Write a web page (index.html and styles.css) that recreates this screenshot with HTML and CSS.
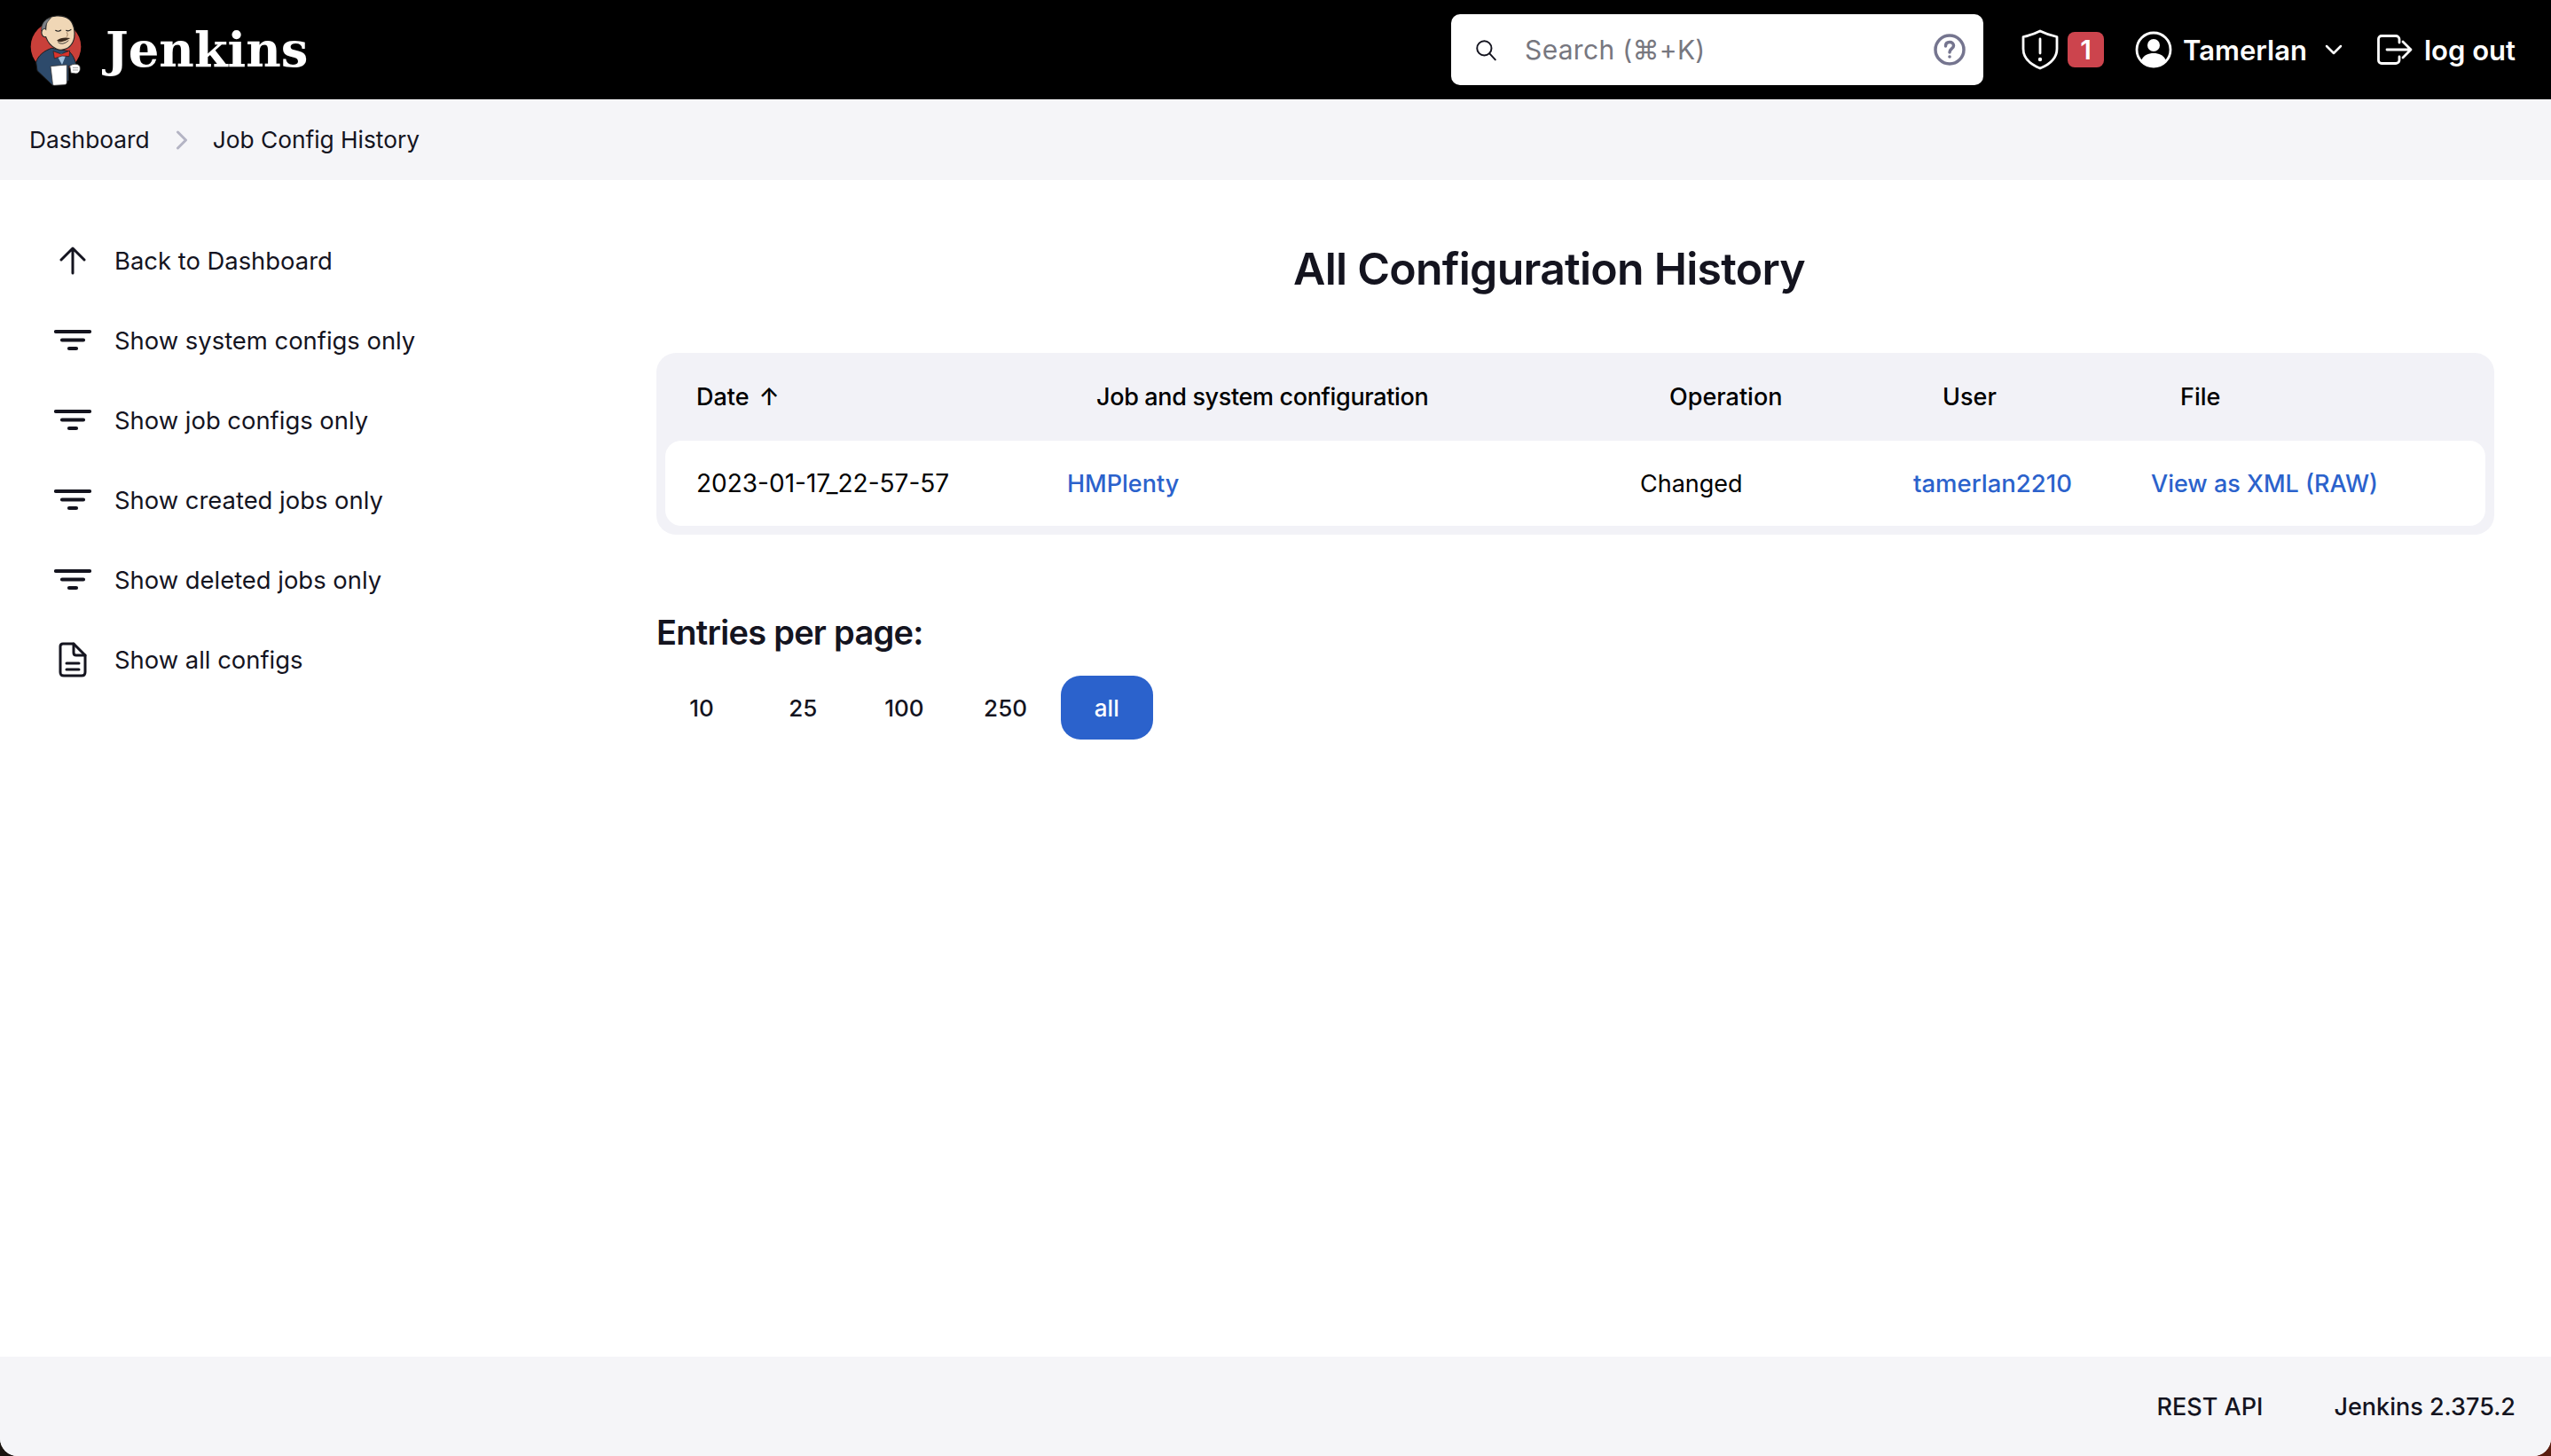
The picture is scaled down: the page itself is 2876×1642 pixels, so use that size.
FILE: index.html
```html
<!DOCTYPE html>
<html lang="en">
<head>
<meta charset="utf-8">
<title>Job Config History</title>
<link rel="stylesheet" href="styles.css">
</head>
<body>
<div class="page">
  <header class="topbar">
    <a class="brand">
      <svg class="logo" viewBox="0 0 270 270" width="90" height="90" aria-hidden="true">
        <circle cx="129" cy="125" r="85" fill="#c9403a"/>
        <path d="M62 178 C68 155 90 138 115 130 L172 140 C186 150 194 170 198 188 L172 190 L172 240 L118 256 L66 206 Z" fill="#2d4a6b" stroke="#1c1c1c" stroke-width="3"/>
        <path d="M130 150 L166 146 L150 186 Z" fill="#9fc0dc"/>
        <path d="M120 140 L147 150 L176 138 L174 158 L150 156 L124 165 Z" fill="#d9342c" stroke="#1c1c1c" stroke-width="2"/>
        <path d="M97 34 C110 20 150 14 174 32 C195 52 196 90 186 110 C176 130 152 142 130 132 C112 124 100 106 95 92 C85 94 77 82 82 70 C85 62 92 62 95 66 Z" fill="#f0d7b6" stroke="#262626" stroke-width="3.500"/>
        <path d="M102 30 C86 38 78 54 81 72 C85 64 90 63 94 66 C94 50 100 40 112 28 Z" fill="#7c8086" stroke="#262626" stroke-width="2"/>
        <path d="M128 70 Q137 76 146 69 M164 70 Q172 74 180 67" fill="none" stroke="#222" stroke-width="3.500" stroke-linecap="round"/>
        <path d="M166 76 Q172 88 164 92" fill="none" stroke="#8a6a4a" stroke-width="2.500"/>
        <path d="M132 104 Q150 90 178 96 Q162 106 150 108 Q140 110 132 104 Z" fill="#3a2a1e"/>
        <path d="M136 110 Q152 122 172 104" fill="none" stroke="#222" stroke-width="2.500"/>
        <path d="M111 191 L166 186 L166 246 C166 252 162 254 156 254 L124 256 C120 256 118 254 118 250 Z" fill="#fff" stroke="#3a3a3a" stroke-width="2.500"/>
        <path d="M176 190 C186 182 204 182 209 190 C214 200 210 214 198 216 L180 214 Z" fill="#fff" stroke="#3a3a3a" stroke-width="2.500"/>
        <path d="M186 196 H204 M186 204 H204" stroke="#777" stroke-width="2"/>
      </svg>
      <span class="wordmark">Jenkins</span>
    </a>
    <div class="search">
      <svg class="search-icon" viewBox="0 0 24 24" width="26" height="26" aria-hidden="true"><circle cx="10.500" cy="10.500" r="7.500"/><path d="M16 16 L22 22.500"/></svg>
      <span class="search-text">Search (⌘+K)</span>
      <svg class="help-icon" viewBox="0 0 36 36" width="36" height="36" aria-hidden="true"><circle cx="18" cy="18" r="16"/><path d="M13.500 14 C13.500 11 15.500 9.500 18 9.500 C20.500 9.500 22.500 11 22.500 13.500 C22.500 17 18 17 18 21"/><circle class="dot" cx="18" cy="26" r="1.800"/></svg>
    </div>
    <div class="actions">
      <div class="alert">
        <svg class="bar-icon" viewBox="0 0 44 46" width="44" height="46" aria-hidden="true"><path d="M22 2 C28 5 34 7 41 8.500 V22 C41 33 32 40 22 44 C12 40 3 33 3 22 V8.500 C10 7 16 5 22 2 Z"/><path d="M22 11 V27"/><circle class="dot" cx="22" cy="34" r="2.200"/></svg>
        <span class="badge">1</span>
      </div>
      <div class="user">
        <svg class="bar-icon" viewBox="0 0 42 42" width="42" height="42" aria-hidden="true"><circle cx="21" cy="21" r="19"/><circle class="dot" cx="21" cy="16" r="7"/><path class="dot" d="M7 33 C10 27 15 25 21 25 C27 25 32 27 35 33 C31 38 26 40 21 40 C16 40 11 38 7 33 Z"/></svg>
        <span class="user-name">Tamerlan</span>
        <svg class="chevron" viewBox="0 0 20 12" width="20" height="12" aria-hidden="true"><path d="M2 2 L10 10 L18 2"/></svg>
      </div>
      <div class="logout">
        <svg class="bar-icon" viewBox="0 0 40 34" width="40" height="34" aria-hidden="true"><path d="M25 9 V5 C25 3 23 1.500 21 1.500 H5 C3 1.500 1.500 3 1.500 5 V29 C1.500 31 3 32.500 5 32.500 H21 C23 32.500 25 31 25 29 V25"/><path d="M11 17 H38 M29 8 L38 17 L29 26"/></svg>
        <span class="user-name">log out</span>
      </div>
    </div>
  </header>

  <nav class="crumbs">
    <span>Dashboard</span>
    <svg class="crumb-sep" viewBox="0 0 14 22" width="14" height="22" aria-hidden="true"><path d="M2.500 2 L11.500 11 L2.500 20"/></svg>
    <span>Job Config History</span>
  </nav>

  <div class="body">
    <aside class="side">
      <a class="task">
        <span class="task-icon"><svg viewBox="0 0 30 32" width="30" height="32" aria-hidden="true"><path d="M15 30 V3 M2 15 L15 2 L28 15"/></svg></span>
        Back to Dashboard
      </a>
      <a class="task">
        <span class="task-icon"><svg class="filter" viewBox="0 0 42 26" width="42" height="26" aria-hidden="true"><path d="M2 3 H40 M9 12.500 H33 M17 22 H25"/></svg></span>
        Show system configs only
      </a>
      <a class="task">
        <span class="task-icon"><svg class="filter" viewBox="0 0 42 26" width="42" height="26" aria-hidden="true"><path d="M2 3 H40 M9 12.500 H33 M17 22 H25"/></svg></span>
        Show job configs only
      </a>
      <a class="task">
        <span class="task-icon"><svg class="filter" viewBox="0 0 42 26" width="42" height="26" aria-hidden="true"><path d="M2 3 H40 M9 12.500 H33 M17 22 H25"/></svg></span>
        Show created jobs only
      </a>
      <a class="task">
        <span class="task-icon"><svg class="filter" viewBox="0 0 42 26" width="42" height="26" aria-hidden="true"><path d="M2 3 H40 M9 12.500 H33 M17 22 H25"/></svg></span>
        Show deleted jobs only
      </a>
      <a class="task">
        <span class="task-icon"><svg class="doc" viewBox="0 0 32 40" width="32" height="40" aria-hidden="true"><path d="M5 2 H17 L30 15 V34 C30 37 28 38 26 38 H6 C3 38 2 37 2 34 V5 C2 3 3 2 5 2 Z"/><path d="M17 2 V12 C17 14 18 15 20 15 H30"/><path d="M9 24 H23 M9 31 H23"/></svg></span>
        Show all configs
      </a>
    </aside>

    <main class="main">
      <h1 class="title">All Configuration History</h1>
      <div class="table-wrap">
        <table class="history">
          <thead>
            <tr>
              <th class="c1">Date<span class="sort">↑</span></th>
              <th class="c2">Job and system configuration</th>
              <th class="c3">Operation</th>
              <th class="c4">User</th>
              <th class="c5">File</th>
            </tr>
          </thead>
          <tbody>
            <tr>
              <td class="date">2023-01-17_22-57-57</td>
              <td><a class="link">HMPlenty</a></td>
              <td>Changed</td>
              <td><a class="link wide">tamerlan2210</a></td>
              <td><a class="link">View as XML (RAW)</a></td>
            </tr>
          </tbody>
        </table>
      </div>
      <h2 class="entries-title">Entries per page:</h2>
      <div class="pager">
        <a class="page-btn">10</a>
        <a class="page-btn">25</a>
        <a class="page-btn">100</a>
        <a class="page-btn">250</a>
        <a class="page-btn active">all</a>
      </div>
    </main>
  </div>

  <footer class="foot">
    <span>REST API</span>
    <span>Jenkins 2.375.2</span>
  </footer>
</div>
</body>
</html>
```
FILE: styles.css
```css
* { box-sizing: border-box; }
html, body { margin: 0; height: 100%; }
body {
  background: linear-gradient(90deg, #1a1410, #5a1e10);
  font-family: Inter, "Noto Sans", sans-serif;
  font-size: 27px;
  color: #14141f;
}
.page {
  height: 1642px;
  display: flex;
  flex-direction: column;
  background: #fff;
  border-radius: 0 0 20px 20px;
  overflow: hidden;
}
.topbar {
  height: 112px;
  flex: none;
  background: #000;
  color: #fff;
  display: flex;
  align-items: center;
  padding: 0 40px 0 20px;
}
.brand { display: flex; align-items: center; gap: 9px; margin-right: auto; }
.logo { display: block; margin-top: 0; }
.wordmark {
  font-family: "DejaVu Serif", serif;
  font-weight: 700;
  font-size: 54.4px;
  line-height: 1;
  letter-spacing: 0;
}
.search {
  width: 600px;
  height: 80px;
  background: #fff;
  border-radius: 10px;
  display: flex;
  align-items: center;
  padding: 0 20px 0 26px;
  margin-right: 42px;
}
.search-icon { fill: none; stroke: #14141f; stroke-width: 1.8; stroke-linecap: round; }
.search-text { margin-left: 31px; color: #77777f; flex: 1; font-size: 30px; letter-spacing: 0.3px; }
.help-icon { fill: none; stroke: #75758f; stroke-width: 3.5; stroke-linecap: round; }
.help-icon .dot { fill: #75758f; stroke: none; }
.actions { display: flex; align-items: center; font-weight: 600; font-size: 31px; }
.bar-icon { fill: none; stroke: #fff; stroke-width: 2.8; stroke-linecap: round; stroke-linejoin: round; display: block; }
.bar-icon .dot { fill: #fff; stroke: none; }
.alert { display: flex; align-items: center; gap: 9px; margin-right: 35px; }
.badge {
  width: 41px;
  height: 40px;
  border-radius: 8px;
  background: #cc444d;
  color: #fff;
  display: flex;
  align-items: center;
  justify-content: center;
  font-size: 30px;
}
.user { display: flex; align-items: center; gap: 12px; margin-right: 39px; }
.chevron { fill: none; stroke: #fff; stroke-width: 2.500; stroke-linecap: round; stroke-linejoin: round; margin-left: 8px; }
.logout { display: flex; align-items: center; gap: 13px; }
.crumbs {
  height: 91px;
  flex: none;
  background: #f5f5f8;
  display: flex;
  align-items: center;
  padding: 0 33px;
  font-size: 26.3px;
}
.crumb-sep { fill: none; stroke: #b4b4c4; stroke-width: 3; stroke-linecap: round; stroke-linejoin: round; margin: 0 28px 0 29px; }
.body { flex: 1; display: flex; min-height: 0; }
.side { width: 740px; flex: none; padding: 46px 0 0 33px; }
.task { display: flex; align-items: center; height: 90px; font-size: 27.4px; }
.task-icon { width: 96px; flex: none; display: flex; justify-content: center; padding-left: 2px; align-items: center; }
.task-icon svg { fill: none; stroke: #14141f; stroke-width: 3; stroke-linecap: round; stroke-linejoin: round; display: block; }
.task-icon .filter { stroke-width: 4.200; }
.main { flex: 1; padding-right: 64px; min-width: 0; }
.title {
  margin: 65px 59px 0 0;
  font-size: 50px;
  font-weight: 600;
  line-height: 70px;
  text-align: center;
  letter-spacing: -0.75px;
}
.table-wrap {
  margin-top: 60px;
  background: #f2f2f7;
  border-radius: 22px;
  padding: 0 10px 10px;
}
.history { width: 100%; border-collapse: separate; border-spacing: 0; table-layout: fixed; color: #000; }
.history th {
  height: 99px;
  padding: 0 0 0 69px;
  text-align: left;
  font-weight: 500;
}
.history th.c1 { width: 417px; padding-left: 35px; }
.history th.c2 { width: 646px; letter-spacing: -0.35px; }
.history th.c3 { width: 308px; }
.history th.c4 { width: 268px; }
.sort { margin-left: 11px; }
.history td { height: 96px; padding: 0 0 0 36px; background: #fff; }
.history td:first-child { border-radius: 18px 0 0 18px; }
.history td:last-child { border-radius: 0 18px 18px 0; }
.history td.date { font-size: 28px; padding-left: 35px; }
.link { color: #2b62cc; font-weight: 500; }
.link.wide { font-size: 27.5px; }
.entries-title {
  margin: 85px 0 0;
  font-size: 38px;
  font-weight: 600;
  line-height: 50px;
  letter-spacing: -0.73px;
}
.pager { display: flex; gap: 10.2px; margin: 24px 0 0 -1px; }
.page-btn {
  width: 104px;
  height: 72px;
  border-radius: 22px;
  display: flex;
  align-items: center;
  justify-content: center;
  font-size: 26px;
  font-weight: 500;
}
.page-btn.active { background: #2b62cc; color: #fff; }
.foot {
  height: 112px;
  flex: none;
  background: #f5f5f8;
  display: flex;
  align-items: center;
  justify-content: flex-end;
  gap: 80px;
  padding-right: 40px;
  font-weight: 500;
}
```
